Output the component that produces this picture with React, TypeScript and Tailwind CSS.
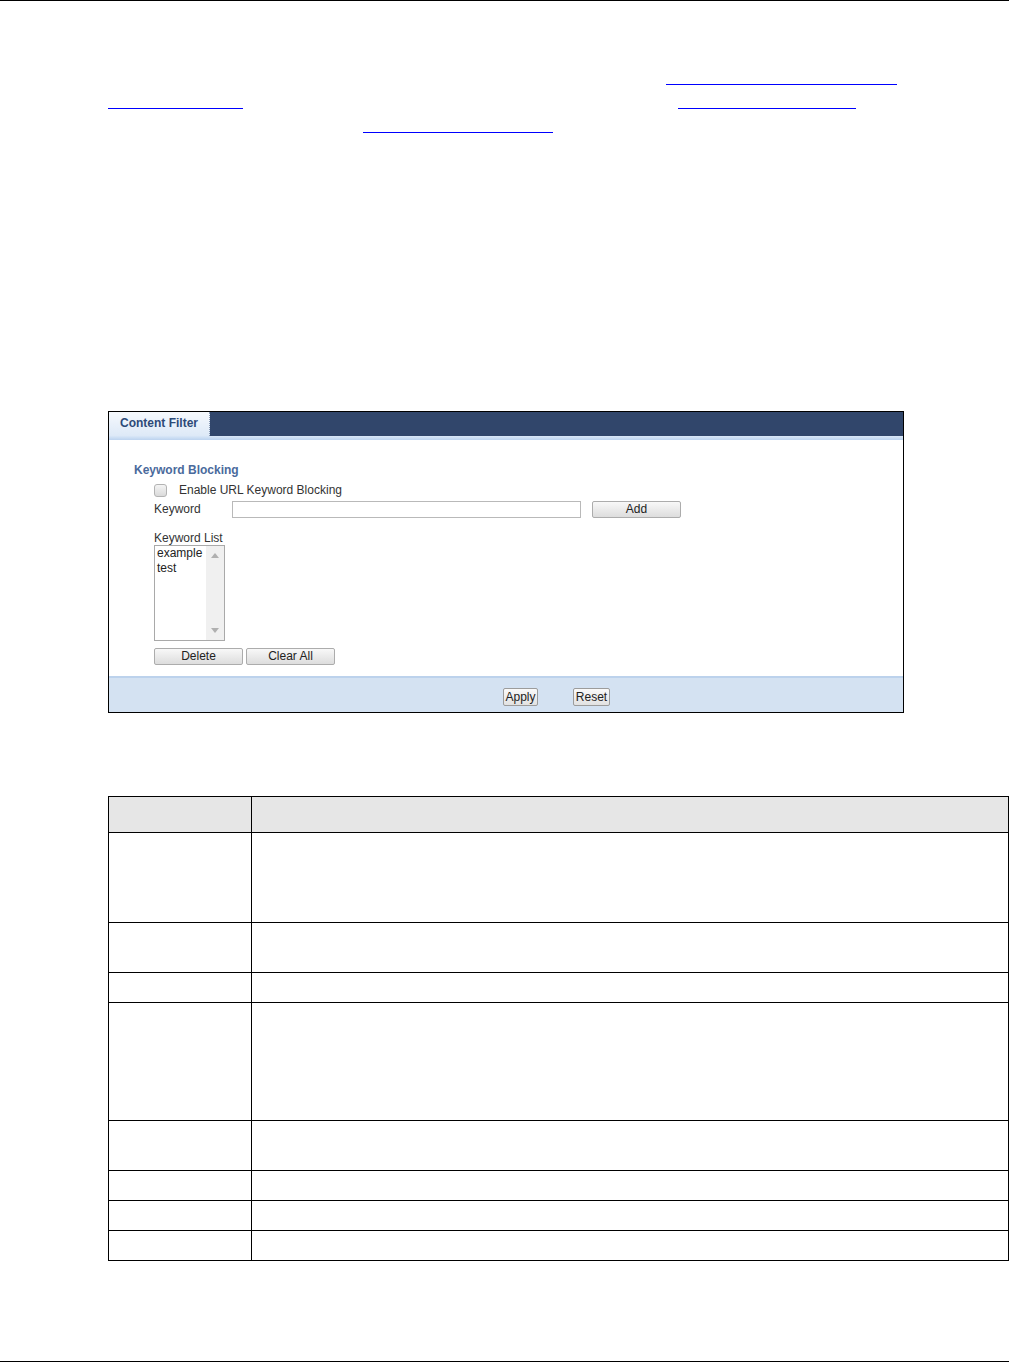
import React from 'react';

function Btn({ label, w }: { label: string; w: string }) {
  return (
    <button
      className={`${w} h-[17px] rounded-[2px] border border-[#acacac] bg-gradient-to-b from-[#f8f8f8] to-[#dddddd] text-[12px] leading-[15px] text-[#222]`}
    >
      {label}
    </button>
  );
}

function SmallBtn({ label, w }: { label: string; w: string }) {
  return (
    <button
      className={`${w} h-[18px] rounded-[2px] border border-[#9c9c9c] bg-gradient-to-b from-[#fafafa] to-[#e2e2e2] text-[12px] leading-[16px] text-[#222] px-0`}
    >
      {label}
    </button>
  );
}

const rows = [90, 50, 30, 118, 50, 30, 30, 30];

export default function App() {
  return (
    <div className="w-[1009px] h-[1364px] bg-white flex flex-col font-['Liberation_Sans',Arial,sans-serif]">
      {/* page header rule */}
      <div className="h-px w-full bg-black" />

      {/* paragraph with link underlines */}
      <div className="pt-[60px] flex flex-col">
        <div className="h-[24px] flex items-end">
          <span className="ml-[666px] w-[231px] h-px bg-[#0000ff]" />
        </div>
        <div className="h-[24px] flex items-end">
          <span className="ml-[108px] w-[135px] h-px bg-[#0000ff]" />
          <span className="ml-[435px] w-[178px] h-px bg-[#0000ff]" />
        </div>
        <div className="h-[24px] flex items-end">
          <span className="ml-[363px] w-[190px] h-px bg-[#0000ff]" />
        </div>
      </div>

      {/* screenshot panel */}
      <div className="mt-[278px] ml-[108px] w-[796px] h-[302px] border border-black flex flex-col">
        <div className="h-[24px] flex">
          <div className="w-[101px] bg-gradient-to-b from-[#f6f9fd] to-[#dde9f7] border-r border-dotted border-[#8a9bb5] pl-[11px] text-[12px] font-bold leading-[22px] text-[#2d4a78]">
            Content Filter
          </div>
          <div className="flex-1 bg-[#31466b]" />
        </div>
        <div className="h-[4px] bg-gradient-to-b from-[#d9e7f7] to-[#bcd3ef]" />

        <div className="flex-1 flex flex-col pl-[25px] pt-[23px]">
          <div className="text-[12px] font-bold leading-[14px] text-[#4a6a9c]">Keyword Blocking</div>

          <div className="pl-[20px] flex flex-col">
            <div className="mt-[7px] h-[13px] flex items-center">
              <span className="w-[13px] h-[13px] rounded-[3px] border border-[#b3b3b3] bg-gradient-to-b from-[#f4f4f4] to-[#dadada]" />
              <span className="ml-[12px] text-[12px] leading-[13px] text-[#333]">Enable URL Keyword Blocking</span>
            </div>

            <div className="mt-[4px] h-[17px] flex items-center">
              <span className="w-[78px] text-[12px] leading-[17px] text-[#333]">Keyword</span>
              <span className="w-[349px] h-[17px] border border-[#b9b9b9] bg-white" />
              <span className="ml-[11px] flex">
                <Btn label="Add" w="w-[89px]" />
              </span>
            </div>

            <div className="mt-[13px] text-[12px] leading-[14px] text-[#333]">Keyword List</div>
            <div className="w-[71px] h-[96px] border border-[#a9a9a9] flex bg-white">
              <div className="flex-1 pl-[2px] text-[12px] leading-[15px] text-[#222]">
                <div>example</div>
                <div>test</div>
              </div>
              <div className="w-[18px] bg-[#f0f0f0] flex flex-col items-center justify-between py-[7px]">
                <svg width="8" height="5" viewBox="0 0 8 5">
                  <path d="M0 5 L4 0 L8 5 Z" fill="#b0b0b0" />
                </svg>
                <svg width="8" height="5" viewBox="0 0 8 5">
                  <path d="M0 0 L4 5 L8 0 Z" fill="#b0b0b0" />
                </svg>
              </div>
            </div>

            <div className="mt-[7px] flex gap-[3px]">
              <Btn label="Delete" w="w-[89px]" />
              <Btn label="Clear All" w="w-[89px]" />
            </div>
          </div>
        </div>

        <div className="h-[36px] border-t-2 border-[#bcd2ec] bg-[#d4e2f2] flex items-start pt-[10px] pl-[394px] gap-[35px]">
          <SmallBtn label="Apply" w="w-[35px]" />
          <SmallBtn label="Reset" w="w-[37px]" />
        </div>
      </div>

      {/* description table */}
      <div className="mt-[83px] ml-[108px] w-[901px] border-t border-l border-r border-black flex flex-col">
        <div className="h-[36px] flex border-b border-black bg-[#e6e6e6]">
          <div className="w-[143px] border-r border-black" />
          <div className="flex-1" />
        </div>
        {rows.map((h, i) => (
          <div key={i} className="flex border-b border-black" style={{ height: h }}>
            <div className="w-[143px] border-r border-black" />
            <div className="flex-1" />
          </div>
        ))}
      </div>

      <div className="mt-auto mb-[2px] h-px w-full bg-black" />
    </div>
  );
}
